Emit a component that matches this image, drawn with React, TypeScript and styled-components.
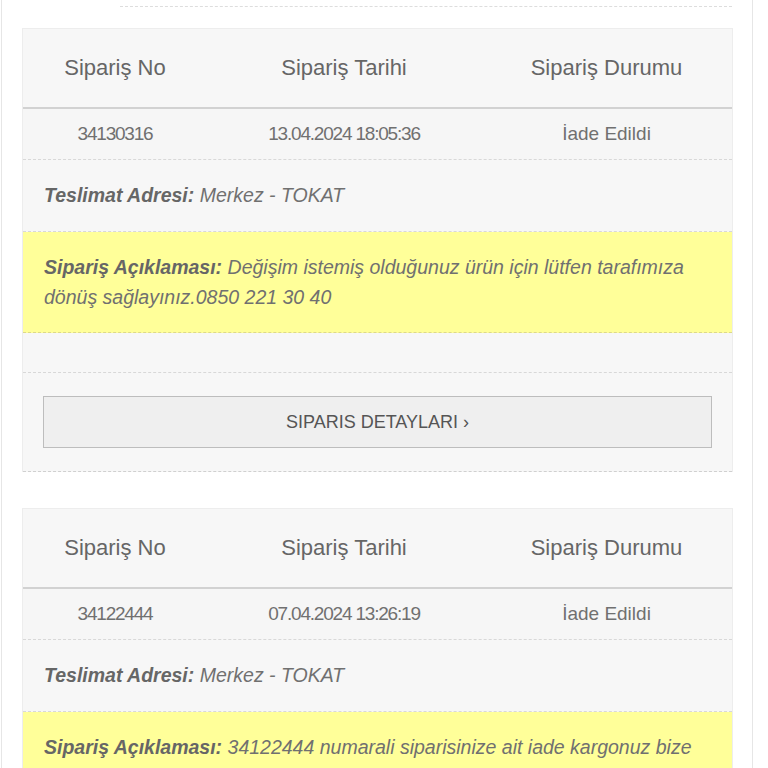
import styled, { createGlobalStyle } from "styled-components";

const FONT = `"Liberation Sans", Arial, sans-serif`;

const GlobalStyle = createGlobalStyle`
  html, body {
    margin: 0;
    padding: 0;
    background: #ffffff;
  }
  body {
    font-family: ${FONT};
    color: #666666;
  }
`;

type Order = {
  no: string;
  date: string;
  status: string;
  address: string;
  note: string;
};

const orders: Order[] = [
  {
    no: "34130316",
    date: "13.04.2024 18:05:36",
    status: "İade Edildi",
    address: "Merkez - TOKAT",
    note: "Değişim istemiş olduğunuz ürün için lütfen tarafımıza dönüş sağlayınız.0850 221 30 40",
  },
  {
    no: "34122444",
    date: "07.04.2024 13:26:19",
    status: "İade Edildi",
    address: "Merkez - TOKAT",
    note: "34122444 numarali siparisinize ait iade kargonuz bize ulaşmıştır. Talebiniz 10 iş günü içerisinde hesabınıza yansıtılacaktır.",
  },
];

const OrderCard: React.FC<{ order: Order }> = ({ order }) => (
  <Card>
    <HeaderRow>
      <HeadCell>Sipariş No</HeadCell>
      <HeadCell>Sipariş Tarihi</HeadCell>
      <HeadCell>Sipariş Durumu</HeadCell>
    </HeaderRow>
    <DataRow>
      <DataCell $tight>{order.no}</DataCell>
      <DataCell $tight>{order.date}</DataCell>
      <DataCell>{order.status}</DataCell>
    </DataRow>
    <InfoRow>
      <Label>Teslimat Adresi:</Label> {order.address}
    </InfoRow>
    <NoteRow>
      <Label>Sipariş Açıklaması:</Label> {order.note}
    </NoteRow>
    <EmptyRow />
    <ButtonRow>
      <DetailButton>SIPARIS DETAYLARI ›</DetailButton>
    </ButtonRow>
  </Card>
);

const App: React.FC = () => {
  return (
    <>
      <GlobalStyle />
      <Page>
        <TopDivider />
        {orders.map((o) => (
          <OrderCard key={o.no} order={o} />
        ))}
      </Page>
    </>
  );
};

const Page = styled.div`
  width: 750px;
  margin-left: 1px;
  min-height: 768px;
  border-left: 1px solid #e6e6e6;
  border-right: 1px solid #e6e6e6;
  display: flex;
  flex-direction: column;
  gap: 36px;
`;

const TopDivider = styled.div`
  height: 6px;
  margin: 0 20px -15px 118px;
  border-bottom: 1px dashed #dddddd;
`;

const Card = styled.div`
  margin: 0 19px 0 20px;
  background: #f7f7f7;
  border: 1px solid #ededed;
  border-bottom: none;
`;

const Grid = styled.div`
  display: grid;
  grid-template-columns: 184px 274px 1fr;
  align-items: center;
`;

const HeaderRow = styled(Grid)`
  height: 78px;
  border-bottom: 2px solid #d2d2d2;
`;

const HeadCell = styled.div`
  text-align: center;
  font-size: 22px;
  color: #666666;
`;

const DataRow = styled(Grid)`
  height: 50px;
  background: #f6f6f6;
  border-bottom: 1px dashed #d8d8d8;
`;

const DataCell = styled.div<{ $tight?: boolean }>`
  text-align: center;
  font-size: 19px;
  letter-spacing: ${(p) => (p.$tight ? "-1.2px" : "0")};
  color: #707070;
`;

const InfoRow = styled.div`
  padding: 21px 21px;
  font-size: 19.5px;
  line-height: 29px;
  font-style: italic;
  color: #707070;
  border-bottom: 1px dashed #d8d8d8;
`;

const Label = styled.b`
  font-weight: 700;
  color: #666666;
`;

const NoteRow = styled.div`
  background: #ffff99;
  padding: 20px 21px;
  font-size: 19.5px;
  line-height: 30px;
  font-style: italic;
  color: #707070;
  border-bottom: 1px dashed #dcd88a;
`;

const EmptyRow = styled.div`
  height: 39px;
  border-bottom: 1px dashed #d8d8d8;
`;

const ButtonRow = styled.div`
  padding: 23px 20px 23px;
  border-bottom: 1px dashed #d0d0d0;
`;

const DetailButton = styled.button`
  display: block;
  width: 100%;
  height: 52px;
  background: #efefef;
  border: 1px solid #bdbdbd;
  font-family: ${FONT};
  font-size: 18px;
  color: #555555;
  cursor: pointer;
`;

export default App;
